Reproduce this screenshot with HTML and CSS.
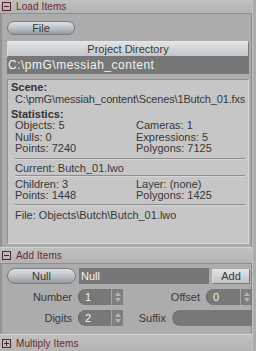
FILE: index.html
```html
<!DOCTYPE html>
<html lang="en">
<head>
    <meta charset="UTF-8">
    <meta name="viewport" content="width=device-width, initial-scale=1.0">
    <title>Load Items</title>
    <link rel="stylesheet" href="styles.css">
</head>
<body>
    <div class="panel">
        <div class="sec-head first">
            <svg class="toggle" width="9" height="9" viewBox="0 0 9 9"><rect x="0.5" y="0.5" width="8" height="8" fill="none" stroke="#5a2326"/><path d="M2 4.5h5" stroke="#5a2326"/></svg>
            <span>Load Items</span>
        </div>
        <div class="sec-body load">
            <button class="pill file-btn">File</button>
            <button class="bar-btn">Project Directory</button>
            <div class="path-field">C:\pmG\messiah_content</div>

            <div class="info">
                <div class="info-title">Scene:</div>
                <div class="info-line scene-path">C:\pmG\messiah_content\Scenes\1Butch_01.fxs</div>
                <div class="info-title stats-title">Statistics:</div>
                <div class="stats">
                    <span>Objects: 5</span><span>Cameras: 1</span>
                    <span>Nulls: 0</span><span>Expressions: 5</span>
                    <span>Points: 7240</span><span>Polygons: 7125</span>
                </div>
                <div class="sep sep-a"></div>
                <div class="info-line current">Current: Butch_01.lwo</div>
                <div class="sep sep-b"></div>
                <div class="stats obj-stats">
                    <span>Children: 3</span><span>Layer: (none)</span>
                    <span>Points: 1448</span><span>Polygons: 1425</span>
                </div>
                <div class="sep sep-c"></div>
                <div class="info-line file-line">File: Objects\Butch\Butch_01.lwo</div>
            </div>
        </div>

        <div class="sec-head">
            <svg class="toggle" width="9" height="9" viewBox="0 0 9 9"><rect x="0.5" y="0.5" width="8" height="8" fill="none" stroke="#5a2326"/><path d="M2 4.5h5" stroke="#5a2326"/></svg>
            <span>Add Items</span>
        </div>
        <div class="sec-body add">
            <div class="row row-null">
                <button class="pill null-btn">Null</button>
                <div class="text-field">Null</div>
                <button class="add-btn">Add</button>
            </div>
            <div class="row">
                <label class="lbl">Number</label>
                <div class="spinner">
                    <span class="spin-val">1</span>
                    <span class="spin-arrows"><i class="up"></i><i class="down"></i></span>
                </div>
                <label class="lbl grow">Offset</label>
                <div class="spinner wide">
                    <span class="spin-val">0</span>
                    <span class="spin-arrows"><i class="up"></i><i class="down"></i></span>
                </div>
            </div>
            <div class="row">
                <label class="lbl">Digits</label>
                <div class="spinner">
                    <span class="spin-val">2</span>
                    <span class="spin-arrows"><i class="up"></i><i class="down"></i></span>
                </div>
                <label class="lbl grow">Suffix</label>
                <div class="suffix-field"></div>
            </div>
        </div>

        <div class="sec-head last">
            <svg class="toggle" width="9" height="9" viewBox="0 0 9 9"><rect x="0.5" y="0.5" width="8" height="8" fill="none" stroke="#5a2326"/><path d="M2 4.5h5M4.5 2v5" stroke="#5a2326"/></svg>
            <span>Multiply Items</span>
        </div>
    </div>
</body>
</html>
```

FILE: styles.css
```css
body {
    margin: 0;
    background-color: #acacac;
    font-family: "Liberation Sans", Arial, sans-serif;
    font-size: 11px;
    color: #383838;
    width: 256px;
    height: 351px;
    overflow: hidden;
}
.panel {
    width: 252px;
    height: 351px;
    border-right: 1px solid #c2c2c2;
    box-shadow: inset -1px 0 0 #8a8a8a;
}
.sec-head {
    display: flex;
    align-items: center;
    gap: 5px;
    height: 15px;
    padding-left: 2px;
    background: linear-gradient(#c0c0c0, #b3b3b3);
    border-top: 1px solid #d2d2d2;
    border-bottom: 1px solid #8e8e8e;
    color: #6b2a2e;
    font-size: 10px;
    letter-spacing: 0.1px;
}
.sec-head.first {
    height: 13px;
    border-top: none;
}
.sec-head.last {
    height: 16px;
    border-bottom: none;
}
.toggle {
    flex: none;
}
.sec-body {
    border-left: 2px solid #939393;
    padding: 0 2px 0 5px;
}
.sec-body.load {
    height: 233px;
    padding-top: 7px;
    box-sizing: border-box;
}
.pill {
    display: flex;
    align-items: center;
    justify-content: center;
    font-family: inherit;
    font-size: 11px;
    color: #383838;
    border: 1px solid #767c82;
    border-radius: 8px;
    background: linear-gradient(#dde1e4, #b9bec2 55%, #949a9f);
    padding: 0;
}
.file-btn {
    width: 68px;
    height: 14px;
}
.bar-btn {
    display: block;
    width: 242px;
    height: 16px;
    margin-top: 6px;
    font-family: inherit;
    font-size: 11px;
    color: #383838;
    padding: 0;
    border: 1px solid #74787c;
    border-top-color: #e4e6e8;
    border-left-color: #d8dadc;
    background: linear-gradient(#e1e4e6, #c2c6c9);
}
.path-field {
    height: 17px;
    line-height: 17px;
    width: 241px;
    padding-left: 1px;
    background-color: #777777;
    color: #f2f2f2;
    font-size: 12px;
    letter-spacing: 0.5px;
    white-space: nowrap;
}
.info {
    margin-top: 5px;
    width: 242px;
    height: 165px;
    background-color: #c6c6c6;
    border: 1px solid #8f8f8f;
    border-right-color: #dadada;
    border-bottom-color: #dadada;
    padding: 1px 0 0 3px;
    box-sizing: border-box;
    line-height: 12px;
}
.info-title {
    font-weight: bold;
    color: #333;
}
.stats-title {
    margin-top: 3px;
}
.info-line {
    padding-left: 4px;
    white-space: nowrap;
}
.scene-path {
    letter-spacing: -0.15px;
}
.stats {
    display: grid;
    grid-template-columns: 121px 1fr;
    padding-left: 4px;
    line-height: 11.5px;
}
.sep {
    height: 0;
    margin: 0 3px 0 4px;
    border-top: 1px solid #8e8e8e;
    border-bottom: 1px solid #d6d6d6;
}
.sep-a {
    margin-top: 3px;
}
.current {
    margin-top: 2px;
}
.sep-b {
    margin-top: 1px;
}
.obj-stats {
    margin-top: 2px;
}
.sep-c {
    margin-top: 2px;
}
.file-line {
    margin-top: 3px;
}
.sec-body.add {
    height: 70px;
    padding-top: 4px;
    padding-right: 0;
    box-sizing: border-box;
}
.row {
    display: flex;
    align-items: center;
    gap: 6px;
    height: 16px;
    margin-bottom: 5px;
}
.row-null {
    gap: 3px;
}
.null-btn {
    width: 69px;
    height: 16px;
}
.text-field {
    width: 128px;
    height: 16px;
    line-height: 16px;
    padding-left: 2px;
    background-color: #777777;
    color: #f2f2f2;
}
.add-btn {
    width: 38px;
    height: 15px;
    padding: 0;
    font-family: inherit;
    font-size: 11px;
    color: #383838;
    border: 1px solid #75797d;
    border-top-color: #e0e2e4;
    border-left-color: #d6d8da;
    background: linear-gradient(#e0e3e5, #bfc3c6);
}
.lbl {
    width: 65px;
    text-align: right;
    flex: none;
}
.lbl.grow {
    flex: 1;
    width: auto;
}
.spinner {
    display: flex;
    width: 45px;
    height: 16px;
    box-sizing: border-box;
    background-color: #787878;
    border-radius: 8px 0 0 8px;
    border-left: 1px solid #5f5f5f;
    flex: none;
}
.spinner.wide {
    width: 46px;
}
.spin-val {
    flex: 1;
    padding-left: 6px;
    line-height: 16px;
    color: #f2f2f2;
}
.spin-arrows {
    width: 11px;
    display: flex;
    flex-direction: column;
    align-items: center;
    justify-content: center;
    gap: 2px;
    border-left: 1px solid #a3a3a3;
    background-color: #7e7e7e;
}
.spin-arrows i {
    width: 0;
    height: 0;
    border-left: 3px solid transparent;
    border-right: 3px solid transparent;
}
.spin-arrows .up {
    border-bottom: 4px solid #b4b4b4;
}
.spin-arrows .down {
    border-top: 4px solid #b4b4b4;
}
.suffix-field {
    width: 80px;
    height: 16px;
    background-color: #787878;
    border-radius: 8px 0 0 8px;
    flex: none;
}
```
